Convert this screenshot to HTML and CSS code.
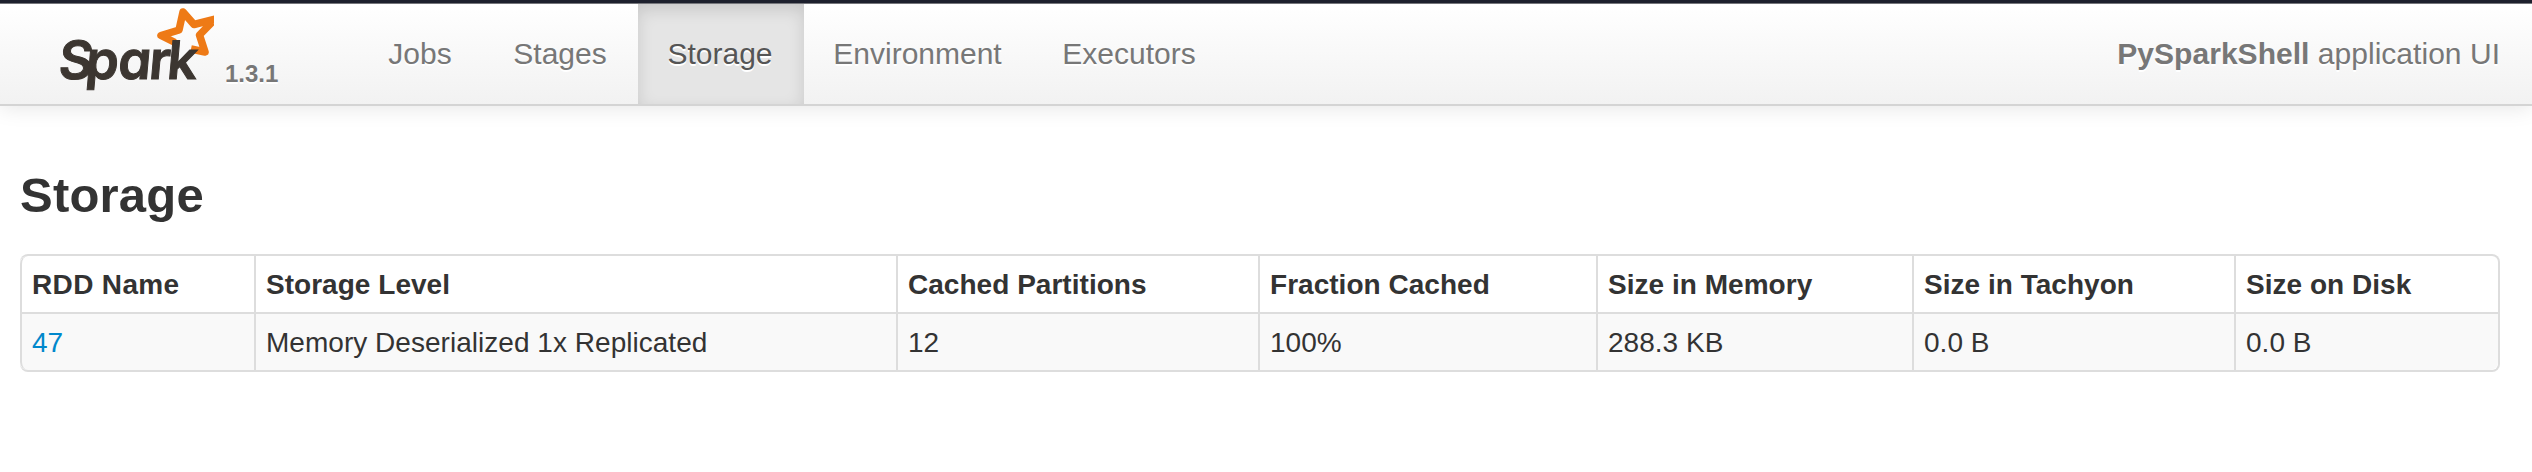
FILE: index.html
```html
<!DOCTYPE html>
<html lang="en">
<head>
<meta charset="utf-8">
<title>PySparkShell - Storage</title>
<link rel="stylesheet" href="styles.css">
</head>
<body>
<header class="navbar">
  <a class="brand">
    <svg class="logo" width="158.500" height="100" viewBox="0 0 158.500 100" role="img" aria-label="Spark">
      <path class="star" d="M120 38.500 L106 31.500 L124 26 L128 8 L139 20.500 L160 15 L144.500 31 L150 48 L136 45"/>
      <text class="wordmark" transform="translate(0 75) skewX(-5)" x="2.500 29.500 62 93 111">Spark</text>
    </svg>
    <span class="version">1.3.1</span>
  </a>
  <nav class="tabs">
    <a class="tab">Jobs</a>
    <a class="tab">Stages</a>
    <a class="tab active">Storage</a>
    <a class="tab">Environment</a>
    <a class="tab">Executors</a>
  </nav>
  <p class="app"><strong>PySparkShell</strong> application UI</p>
</header>
<main class="content">
  <h3 class="title">Storage</h3>
  <table class="table">
    <colgroup><col class="c1"><col class="c2"><col class="c3"><col class="c4"><col class="c5"><col class="c6"><col class="c7"></colgroup>
    <thead>
      <tr><th class="name">RDD Name</th><th>Storage Level</th><th>Cached Partitions</th><th>Fraction Cached</th><th>Size in Memory</th><th>Size in Tachyon</th><th>Size on Disk</th></tr>
    </thead>
    <tbody>
      <tr><td><a class="link">47</a></td><td>Memory Deserialized 1x Replicated</td><td>12</td><td>100%</td><td>288.3 KB</td><td>0.0 B</td><td>0.0 B</td></tr>
    </tbody>
  </table>
</main>
</body>
</html>
```
FILE: styles.css
```css
* { box-sizing: border-box; }
body {
  margin: 0;
  background: #fff;
  color: #333;
  font: 28px/40px "Liberation Sans", Arial, sans-serif;
  border-top: 3px solid #1d202d;
}
.navbar {
  display: flex;
  height: 103px;
  padding: 0 32px 0 55px;
  border-top: 1px solid #75767b;
  border-bottom: 2px solid #d4d4d4;
  background: linear-gradient(#fff, #f2f2f2);
  box-shadow: 0 2px 20px rgba(0, 0, 0, 0.1);
  color: #777;
  font-size: 30px;
  text-shadow: 0 2px 0 #fff;
}
.brand { display: flex; width: 303px; }
.logo { flex: none; text-shadow: none; }
.star { fill: none; stroke: #ee7a16; stroke-width: 7.5; stroke-linejoin: round; }
.wordmark {
  fill: #3c3631;
  stroke: #3c3631;
  stroke-width: 1;
  font: 600 53px Inter, sans-serif;
  font-feature-settings: "cv11";
}
.version { margin: 50px 0 0 11.5px; font-size: 24px; line-height: 40px; font-weight: bold; }
.tabs { display: grid; grid-template-columns: 126px 154px 166px 229px 194px; text-align: center; }
.tab { height: 100px; padding: 30px 2px 30px 0; }
.active { background: #e5e5e5; color: #555; box-shadow: inset 0 6px 16px rgba(0, 0, 0, 0.125); }
.app { margin: 30px 0 0 auto; white-space: nowrap; letter-spacing: 0.03px; }
.content { padding: 59px 32px 0 20px; }
.title { margin: 0; font-size: 49px; line-height: 60px; letter-spacing: 0.2px; height: 89px; }
.table {
  width: 2480px;
  table-layout: fixed;
  border-collapse: separate;
  border-spacing: 0;
  border: 2px solid #ddd;
  border-left: 0;
  border-radius: 8px;
}
.table th, .table td {
  padding: 9px 10px 7px;
  border-left: 2px solid #ddd;
  text-align: left;
  line-height: 40px;
  letter-spacing: 0.03px;
  white-space: nowrap;
}
.table .name { letter-spacing: 0.35px; }
.table td { border-top: 2px solid #ddd; background: #f9f9f9; }
.table th:first-child { border-top-left-radius: 8px; }
.table td:first-child { border-bottom-left-radius: 8px; }
.table td:last-child { border-bottom-right-radius: 8px; }
.c1 { width: 234px; }
.c2 { width: 642px; }
.c3 { width: 362px; }
.c4 { width: 338px; }
.c5 { width: 316px; }
.c6 { width: 322px; }
.c7 { width: 264px; }
.link { color: #08c; }
```
